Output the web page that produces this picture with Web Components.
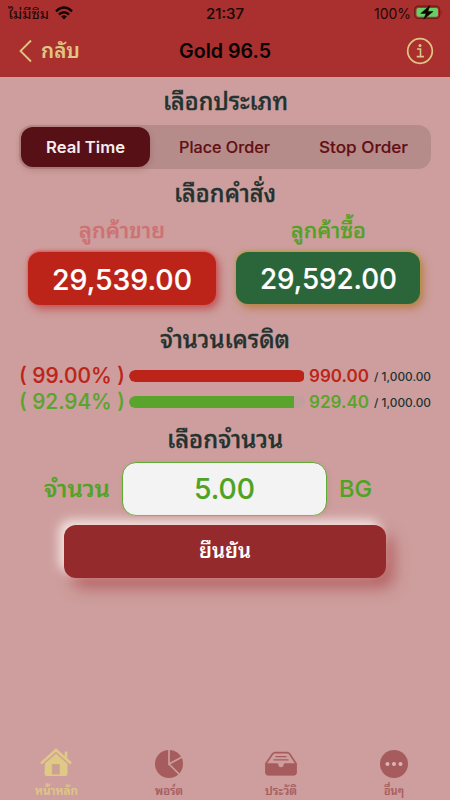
<!DOCTYPE html>
<html lang="th"><head><meta charset="utf-8"><title>Gold 96.5</title>
<style>body{margin:0;background:#cd9e9d}</style></head><body><trade-app></trade-app>
<script>
const sheet = (el, html) => { el.attachShadow({mode:'open'}).innerHTML = html; };

// One line of text: w = drawn width, s = font size, y = baseline shift.
class FitText extends HTMLElement {
  connectedCallback() {
    const w = +this.getAttribute('w'), s = this.getAttribute('s'), b = this.getAttribute('b') || 500, y = this.getAttribute('y') || 0;
    const thai = /[\u0e00-\u0e7f]/.test(this.textContent);
    sheet(this, `<style>:host{display:block;flex:none;width:${w}px;height:20px;white-space:nowrap}
      span{display:inline-block;transform-origin:0 50%;font-size:${s}px;font-weight:${b};line-height:20px;-webkit-text-stroke:${b == 500 ? (thai ? Math.min(.35, s / 70) : .15) : 0}px currentColor}</style><span><slot></slot></span>`);
    const t = this.shadowRoot.querySelector('span');
    t.style.transform = `translateY(${y}px) scaleX(${w / t.getBoundingClientRect().width})`;
  }
}

class StatusBar extends HTMLElement {
  connectedCallback() {
    sheet(this, `<style>:host{display:grid;grid-template-columns:1fr auto 1fr;height:25px;align-items:center;padding:0 7px 0 8px;color:#1b0807}
      div{display:flex;align-items:center}.r{justify-content:flex-end;gap:3px}.l{gap:6px}svg{display:block}.clock{margin-left:-2px}</style>
      <div class="l"><fit-text w="41" s="14" b="400" y="-.5">ไม่มีซิม</fit-text>
      <svg width="18" height="14" viewBox="0 0 18 14" fill="none" stroke="#150504" stroke-width="2.5"><path d="M1 5.3Q9-2.300 17 5.300M3.900 8.500Q9 4 14.100 8.500"/><path d="M6.100 10.500Q9 8.100 11.900 10.500L9 13.600z" fill="#150504" stroke="none"/></svg></div>
      <fit-text class="clock" w="38" s="14" b="500" y="-.5">21:37</fit-text>
      <div class="r"><fit-text w="37" s="14" b="400" y="-.5">100%</fit-text>
      <svg width="29" height="15" viewBox="0 0 29 15"><rect x=".7" y="1.2" width="25" height="12.3" rx="3.6" fill="none" stroke="#6d1b1b" stroke-width="1.2"/><rect x="2.5" y="3" width="21.5" height="8.800" rx="2" fill="#68cf68"/><path d="M27.200 5.300q1.800 2.100 0 4.400z" fill="#6d1b1b"/><path d="M15.800.6 6.800 8.400h5.300L9.700 14.200l9.400-7.700h-5.200z" fill="#120403" stroke="#120403" stroke-width=".5"/></svg></div>`);
  }
}

class NavBar extends HTMLElement {
  connectedCallback() {
    sheet(this, `<style>:host{display:grid;grid-template-columns:1fr auto 1fr;height:52px;align-items:center;padding:0 16px 0 19px;color:#e0c683}
      div{display:flex;align-items:center;gap:8px}.r{justify-content:flex-end}.t{color:#080202;margin-left:-4px}svg{display:block}</style>
      <div><svg width="14" height="24" viewBox="0 0 14 24" fill="none" stroke="currentColor" stroke-width="1.8"><path d="M12 1.5 1.5 12 12 22.5"/></svg><fit-text w="39" s="21" b="600">กลับ</fit-text></div>
      <div class="t"><fit-text w="92" s="20" b="600" y="-.5">Gold 96.5</fit-text></div>
      <div class="r"><svg width="28" height="28" viewBox="0 0 28 28" fill="none" stroke="currentColor" stroke-width="1.700"><circle cx="14" cy="14" r="12.300"/><path d="M11 12h3.500v7.400M10.700 19.600h7.200" stroke-width="1.600"/><circle cx="14" cy="8.400" r="1.500" fill="currentColor" stroke="none"/></svg></div>`);
  }
}

class OrderTypes extends HTMLElement {
  connectedCallback() {
    sheet(this, `<style>:host{display:grid;grid-template-columns:129px 1fr 1fr;width:412px;height:44px;flex:none;box-sizing:border-box;padding:2px;border-radius:13px;background:#b68c8b;color:#620f13;margin:0 auto}
      div{display:flex;align-items:center;justify-content:center}.on{background:#561016;color:#f5eded;border-radius:12px;box-shadow:0 2px 7px #5610163a}</style>
      <div class="on"><fit-text w="79" s="16.5" b="600">Real Time</fit-text></div>
      <div style="padding-left:10px"><fit-text w="91" s="15.5">Place Order</fit-text></div>
      <div style="padding-left:9px"><fit-text w="89" s="16.5">Stop Order</fit-text></div>`);
  }
}

class PriceButton extends HTMLElement {
  connectedCallback() {
    sheet(this, `<style>:host{display:flex;align-items:center;justify-content:center;height:53px;border-radius:12px;color:#fff}
      :host([kind=sell]){width:188px;background:#bc2419;box-shadow:0 -1px 3px #e64b4b,3px 4px 8px #b6262ba0}
      :host([kind=buy]){width:184px;height:52px;background:#2b663a;box-shadow:0 -1px 3px #a9a62a,3px 4px 8px #b06b20b0}</style><slot></slot>`);
  }
}

class CreditRow extends HTMLElement {
  connectedCallback() {
    const a = n => this.getAttribute(n);
    sheet(this, `<style>:host{display:flex;align-items:center;height:26px;padding-left:19px;color:${a('color')}}
      .track{width:176px;height:12px;margin:0 4px 0 3.5px;border-radius:6px;background:#c49e9f;overflow:hidden;flex:none}
      .bar{height:12px;width:${a('fill')}px;background:currentColor;border-radius:6px ${a('end')}px ${a('end')}px 6px}
      .max{color:#24312f;margin-left:5px}</style>
      <fit-text w="106" s="21">( ${a('percent')} )</fit-text><div class="track"><div class="bar"></div></div>
      <fit-text w="60" s="17" b="600" y="-.5">${a('value')}</fit-text><fit-text class="max" w="57" s="11.2" b="450" y="-1.5">/ 1,000.00</fit-text>`);
  }
}

class TabItem extends HTMLElement {
  connectedCallback() {
    sheet(this, `<style>:host{display:flex;flex-direction:column;align-items:center;color:#a65c5d}
      :host([active]){color:#e0c985}::slotted(svg){display:block}</style><slot name="icon"></slot><slot></slot>`);
  }
}

class TradeApp extends HTMLElement {
  connectedCallback() {
    sheet(this, `<style>:host{display:flex;flex-direction:column;width:450px;height:800px;overflow:hidden;background:#cd9e9d;font-family:Inter,"Noto Sans Thai Looped","Noto Sans Thai",Loma,sans-serif;color:#23312f}
      header{background:#aa302f;height:77px;flex:none}
      .title{display:flex;justify-content:center;align-items:center;height:48px;flex:none}
      .prices{display:grid;grid-template-columns:188px 184px;column-gap:20px;padding:0 30px 0 28px;height:94px;align-items:start}
      .side{display:flex;flex-direction:column;align-items:center;gap:12px}
      .qty{display:flex;height:54px;align-items:center;padding-left:44px;color:#4fa324}
      .input{display:flex;width:205px;height:54px;box-sizing:border-box;border:1.5px solid #60ab34;border-radius:14px;background:#f3f3f3;align-items:center;justify-content:center;margin:0 12px;box-shadow:1px 2px 5px #9b4d4d22}
      .confirm{display:flex;justify-content:center;align-items:center;margin:9px auto 0;width:322px;height:52.5px;border:0;padding:0;border-radius:12px;background:#942a2c;color:#fff;font-family:inherit;flex:none;box-shadow:-5px -5px 11px #f4e5e3,8px 10px 15px #a83c4099}
      nav{display:grid;grid-template-columns:repeat(4,1fr);margin-top:auto;height:54px}</style>
    <header><status-bar></status-bar><nav-bar></nav-bar></header>
    <div class="title"><fit-text w="125" s="24" y=".5">เลือกประเภท</fit-text></div>
    <order-types></order-types>
    <div class="title"><fit-text w="102" s="24" y=".5">เลือกคำสั่ง</fit-text></div>
    <div class="prices" style="padding-top:3px">
      <div class="side"><fit-text w="86" s="21.5" style="color:#cd7172">ลูกค้าขาย</fit-text><price-button kind="sell"><fit-text w="140" s="28.3" y=".5">29,539.00</fit-text></price-button></div>
      <div class="side"><fit-text w="75" s="21.5" style="color:#53a126">ลูกค้าซื้อ</fit-text><price-button kind="buy"><fit-text w="137" s="28.3" y=".5">29,592.00</fit-text></price-button></div>
    </div>
    <div class="title" style="height:49px"><fit-text w="130" s="24" y=".5">จำนวนเครดิต</fit-text></div>
    <credit-row percent="99.00%" value="990.00" fill="175.5" end="3" color="#bd2419"></credit-row>
    <credit-row percent="92.94%" value="929.40" fill="165" end="0" color="#59a42d"></credit-row>
    <div class="title" style="height:47px"><fit-text w="116" s="24" y=".5">เลือกจำนวน</fit-text></div>
    <div class="qty"><fit-text w="66" s="23.5">จำนวน</fit-text><div class="input"><fit-text w="61" s="29">5.00</fit-text></div><fit-text w="33" s="23.5">BG</fit-text></div>
    <button class="confirm"><fit-text w="52" s="21" b="600">ยืนยัน</fit-text></button>
    <nav>
      <tab-item active><svg slot="icon" width="34" height="32" viewBox="0 0 34 32"><path d="M6 17 17 7l11.5 10v10.5q0 2.5-2.5 2.5H8q-2.5 0-2.500-2.500z" fill="currentColor"/><path d="M2 17.500 17 4l15 13.500M27 5.500v7" stroke="currentColor" stroke-width="2.600" fill="none"/><path d="M4.500 18.200 17 7.300l12.500 10.900" fill="none" stroke="#cd9e9d" stroke-width="1"/><rect x="13.300" y="18.500" width="7" height="9.500" fill="#cd9e9d" stroke="#c9a983"/></svg><fit-text w="43" s="12" y=".5">หน้าหลัก</fit-text></tab-item>
      <tab-item><svg slot="icon" width="32" height="32" viewBox="0 0 32 32"><circle cx="16" cy="18" r="14" fill="currentColor"/><path d="M16 3v15l14-7.500M16 18l11 11" fill="none" stroke="#cd9e9d" stroke-width="1.700"/></svg><fit-text w="28" s="12" y=".5">พอร์ต</fit-text></tab-item>
      <tab-item><svg slot="icon" width="34" height="32" viewBox="0 0 34 32"><path d="M2 17.500 8.500 8Q9.700 6.700 11 6.700h12q1.500 0 2.700 1.300L32 17.500V26q0 2.500-2.500 2.500h-25Q2 28.500 2 26z" fill="none" stroke="currentColor" stroke-width="1.700"/><path d="M1.500 17.200h11.500q1.500 0 1.500 2 0 2 2.500 2t2.500-2q0-2 1.500-2h11.500V26q0 3.500-3 3.500H4.500q-3 0-3-3.500z" fill="currentColor"/><path d="M11.500 10.700h11M9.500 13.800h15" stroke="currentColor" stroke-width="1.200"/></svg><fit-text w="32" s="12" y=".5">ประวัติ</fit-text></tab-item>
      <tab-item><svg slot="icon" width="32" height="32" viewBox="0 0 32 32"><circle cx="16" cy="18" r="14" fill="currentColor"/><g fill="#dcb5b4"><circle cx="9.500" cy="18" r="2"/><circle cx="16" cy="18" r="2"/><circle cx="22.500" cy="18" r="2"/></g></svg><fit-text w="20" s="12" y=".5">อื่นๆ</fit-text></tab-item>
    </nav>`);
  }
}
customElements.define('trade-app', TradeApp);
customElements.define('status-bar', StatusBar);
customElements.define('nav-bar', NavBar);
customElements.define('order-types', OrderTypes);
customElements.define('price-button', PriceButton);
customElements.define('credit-row', CreditRow);
customElements.define('tab-item', TabItem);
customElements.define('fit-text', FitText);
</script></body></html>
